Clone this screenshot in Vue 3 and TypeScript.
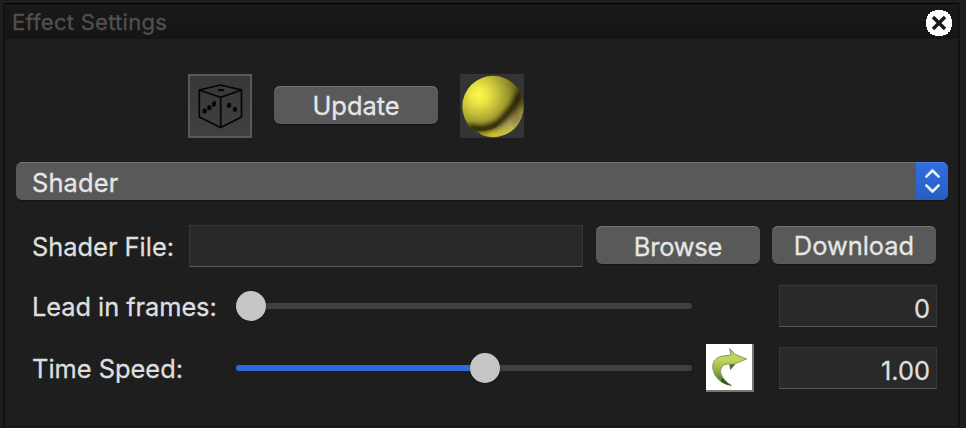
<script setup lang="ts">
import { computed, ref } from 'vue'

interface Slider {
  id: string
  label: string
  value: number
  min: number
  max: number
  decimals: number
  resettable: boolean
}

const effect = ref<string>('Shader')
const shaderFile = ref<string>('')
const sliders = ref<Slider[]>([
  { id: 'lead', label: 'Lead in frames:', value: 0, min: 0, max: 100, decimals: 0, resettable: false },
  { id: 'speed', label: 'Time Speed:', value: 1, min: -10, max: 10, decimals: 2, resettable: true },
])

const rows = computed(() =>
  sliders.value.map((s) => {
    const ratio = (s.value - s.min) / (s.max - s.min)
    return {
      ...s,
      text: s.value.toFixed(s.decimals),
      offset: `${Math.round(ratio * 426)}px`,
      fill: `${(ratio * 456).toFixed(1)}px`,
    }
  }),
)
</script>

<template>
  <div class="frame">
    <section class="panel">
      <header class="titlebar">
        <h1 class="title">Effect Settings</h1>
        <svg class="close" viewBox="0 0 26 26">
          <path shape-rendering="crispEdges" fill="#fff" d="M9 0h8v1h3v1h2v2h2v2h1v3h1v8h-1v3h-1v2h-2v2h-2v1h-3v1H9v-1H6v-1H4v-2H2v-2H1v-3H0V9h1V6h1V4h2V2h2V1h3z" />
          <path fill="none" stroke="#181818" stroke-width="3.4" d="M7 7 19 19M19 7 7 19" />
        </svg>
      </header>

      <div class="actions">
        <div class="dice">
          <svg viewBox="0 0 60 60" width="60" height="60">
            <g fill="none" stroke="#060606" stroke-width="1.7">
              <path d="M9.300 14 30.500 9 51.500 14V41L30.700 51.500 9.300 41z" />
              <path d="M9.300 14 30.700 21.300 51.500 14M30.700 21.300V51.500" />
            </g>
            <g fill="#060606">
              <rect x="28" y="13" width="6" height="2.200" rx=".7" />
              <ellipse cx="24" cy="28" rx="2" ry="3" transform="rotate(10 24 28)" />
              <ellipse cx="19.300" cy="31.700" rx="2.200" ry="2.600" />
              <ellipse cx="14.700" cy="35" rx="2.200" ry="2.700" />
              <ellipse cx="39" cy="29.300" rx="2.200" ry="2.600" />
              <ellipse cx="45" cy="33.300" rx="2.200" ry="2.600" />
            </g>
          </svg>
        </div>
        <button class="button"><span class="w-update">Update</span></button>
        <div class="sphere">
          <svg viewBox="0 0 64 64" width="64" height="64">
            <defs>
              <radialGradient id="shine" gradientUnits="userSpaceOnUse" cx="19" cy="21" r="43">
                <stop offset="0" stop-color="#fdf84f" />
                <stop offset=".2" stop-color="#ece745" />
                <stop offset=".45" stop-color="#c3be39" />
                <stop offset=".7" stop-color="#958f2b" />
                <stop offset="1" stop-color="#4e4914" />
              </radialGradient>
              <linearGradient id="rim" gradientUnits="userSpaceOnUse" x1="36" y1="60" x2="62" y2="24">
                <stop offset="0" stop-color="#b9b130" />
                <stop offset=".35" stop-color="#aaa05e" />
                <stop offset=".65" stop-color="#7d7338" />
                <stop offset="1" stop-color="#5b5318" />
              </linearGradient>
              <clipPath id="ball"><circle cx="33" cy="32.500" r="30.700" /></clipPath>
              <filter id="soft" x="-30%" y="-30%" width="160%" height="160%">
                <feGaussianBlur stdDeviation="2.600" />
              </filter>
            </defs>
            <g clip-path="url(#ball)">
              <rect width="64" height="64" fill="url(#shine)" />
              <path d="M61 15C58 32 44 45 36 53C31 56 25 57 18 57L28 68H70V15z" fill="url(#rim)" />
              <path d="M60 17C58 30 48 39 41 47C33 54 22 57 9 53" fill="none" stroke="#1d1903" stroke-width="5.500" filter="url(#soft)" />
              <path d="M57 55C61 50 63 43 63 34" fill="none" stroke="#bdb444" stroke-width="3" filter="url(#soft)" />
              <path d="M30 62Q45 63 55 53" fill="none" stroke="#d3ca38" stroke-width="4" filter="url(#soft)" />
            </g>
          </svg>
        </div>
      </div>

      <div class="select">
        <span class="select-text"><span class="w-effect">{{ effect }}</span></span>
        <span class="stepper">
          <svg viewBox="0 0 32 38" width="32" height="38" fill="none" stroke="#e8effb" stroke-width="2.600" stroke-linecap="round" stroke-linejoin="round">
            <path d="M10.300 14.700 16.500 8.500 22.700 14.700M10.300 23.300 16.500 29.500 22.700 23.300" />
          </svg>
        </span>
      </div>

      <div class="file-row">
        <label class="label"><span class="w-file">Shader File:</span></label>
        <div class="field file-field">{{ shaderFile }}</div>
        <button class="button browse"><span class="w-browse">Browse</span></button>
        <button class="button download"><span class="w-download">Download</span></button>
      </div>

      <div v-for="row in rows" :key="row.id" class="slider-row">
        <label class="label"><span :class="`w-${row.id}`">{{ row.label }}</span></label>
        <div class="slider">
          <div class="track"><div class="fill" :style="{ width: row.fill }"></div></div>
          <div class="knob" :style="{ left: row.offset }"></div>
        </div>
        <div class="reset-slot">
          <div v-if="row.resettable" class="reset">
            <svg viewBox="0 0 46 46" width="46" height="46">
              <defs>
                <linearGradient id="arrow" x1="0" y1="0" x2="0" y2="1">
                  <stop offset="0" stop-color="#b3c56c" />
                  <stop offset=".3" stop-color="#c2d85a" />
                  <stop offset=".6" stop-color="#93ae48" />
                  <stop offset="1" stop-color="#286a18" />
                </linearGradient>
              </defs>
              <path d="M23.500 4.500 29.500 10.500 40.500 15 29.500 19.500 24.500 25.500 23.500 20C17 19.500 13.500 24 15 30Q18 37 25.500 41.500Q14 39.500 9 31C3.500 20 8 11.500 22 11.500L25 10.500z" fill="url(#arrow)" stroke="#879a5c" stroke-width="1" />
              <path d="M24.200 25.500 24 20.500 29.500 19.700z" fill="#566638" />
              <path d="M16.500 34Q19 38.500 25.500 41.500 19 41 14.500 37z" fill="#215c14" />
            </svg>
          </div>
        </div>
        <div class="field number-field"><span :class="`w-${row.id}-value`">{{ row.text }}</span></div>
      </div>
    </section>
  </div>
</template>

<style>
body {
  background: #1e1e1e;
}
</style>

<style scoped>
.frame {
  box-sizing: border-box;
  width: 966px;
  height: 428px;
  padding: 3px 6px 1px 3px;
  overflow: hidden;
  background: #1e1e1e;
  color: #dfdfdf;
  font-family: Inter, "Liberation Sans", sans-serif;
  font-size: 25.4px;
  line-height: 30px;
  white-space: nowrap;
  -webkit-text-stroke: 0.3px currentColor;
}
.panel {
  box-sizing: border-box;
  height: 424px;
  border: solid #121212;
  border-width: 1px 2px 1px 2px;
  border-top-color: #000;
  background: #1e1e1e;
}
.titlebar {
  box-sizing: border-box;
  display: flex;
  justify-content: space-between;
  height: 35px;
  padding: 6px 6px 0 7px;
  background: linear-gradient(#191919, #151515);
}
.title {
  margin: -1px 0 0;
  color: #505050;
  font-size: 22px;
  font-weight: 400;
  line-height: 26px;
  letter-spacing: 0.27px;
}
.close {
  width: 26px;
  height: 26px;
}
.actions {
  display: flex;
  align-items: center;
  height: 64px;
  margin: 35px 0 0 183px;
}
.dice {
  box-sizing: border-box;
  width: 64px;
  height: 64px;
  margin-right: 22px;
  border: 2px solid #595959;
  background: linear-gradient(#373737, #404040);
}
.dice svg,
.sphere svg,
.stepper svg,
.reset svg {
  display: block;
}
.sphere {
  width: 64px;
  height: 64px;
  margin-left: 22px;
  background: #343434;
}
.button {
  box-sizing: border-box;
  width: 164px;
  height: 38px;
  padding: 0;
  border: 0;
  border-radius: 6px;
  background: #595959;
  box-shadow: inset 0 1px #747474, 0 1px 1px #131313;
  color: #e6e6e6;
  font: inherit;
}
.actions .button {
  margin-top: -2px;
  padding-top: 2px;
}
.select {
  display: flex;
  height: 38px;
  margin: 24px 10px 0 11px;
  overflow: hidden;
  border-radius: 6px;
  background: #595959;
  box-shadow: 0 1px 1px #131313;
}
.select-text {
  flex: 1;
  padding: 6px 0 0 16px;
  box-shadow: inset 0 1px #747474;
  color: #e6e6e6;
}
.stepper {
  width: 32px;
  background: linear-gradient(#336edf, #275dc5);
  box-shadow: inset 0 1px #4a7ee4;
}
.file-row {
  display: flex;
  align-items: flex-start;
  height: 42px;
  margin: 25px 0 0 27px;
}
.file-row .label {
  width: 157px;
  padding-top: 7px;
}
.field {
  box-sizing: border-box;
  height: 42px;
  border: 1px solid #383838;
  border-bottom-color: #5a5a5a;
  background: #292929;
}
.file-field {
  width: 394px;
}
.browse {
  margin: 1px 12px 0 13px;
  padding-top: 3px;
}
.w-browse {
  letter-spacing: -0.2px;
}
.w-effect {
  letter-spacing: 0.15px;
}
.download {
  margin-top: 1px;
  padding-top: 1px;
}
.slider-row {
  display: flex;
  align-items: flex-start;
  height: 42px;
  margin: 18px 0 0 27px;
}
.slider-row + .slider-row {
  margin-top: 20px;
}
.slider-row .label {
  width: 204px;
  padding-top: 7px;
}
.w-lead {
  letter-spacing: -0.06px;
}
.slider {
  position: relative;
  width: 456px;
  padding-top: 18px;
}
.track {
  height: 6px;
  overflow: hidden;
  border-radius: 3px;
  background: #3f3f3f;
}
.fill {
  height: 6px;
  background: #2f69dc;
}
.knob {
  position: absolute;
  top: 6px;
  width: 30px;
  height: 30px;
  border-radius: 50%;
  background: #c6c6c6;
  box-shadow: 0 1px 1px #181818;
}
.reset-slot {
  width: 73px;
  height: 42px;
  padding-left: 14px;
}
.reset {
  box-sizing: border-box;
  width: 48px;
  height: 48px;
  margin-top: -3px;
  border: solid #777;
  border-width: 0 2px 2px 0;
  background: #fff;
}
.number-field {
  width: 158px;
  padding: 8px 6px 0 0;
  text-align: right;
}
</style>
